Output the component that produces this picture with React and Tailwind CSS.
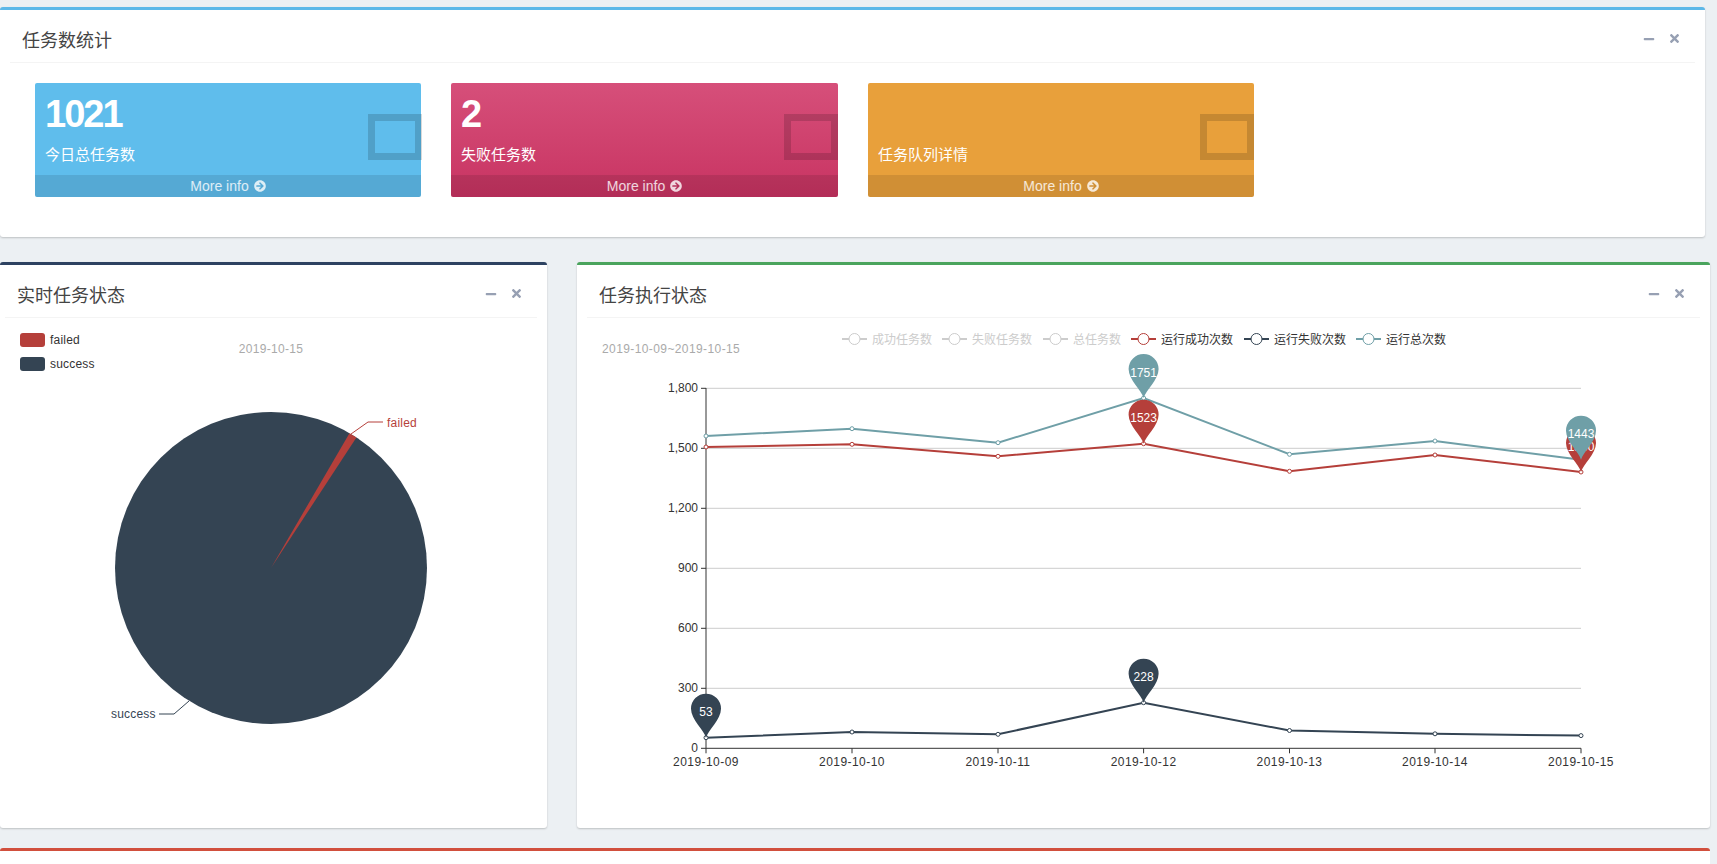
import React from 'react';
import { FaArrowCircleRight, FaMinus, FaTimes } from 'react-icons/fa';

const xs = [706, 852, 998, 1143.6, 1289.5, 1435, 1581];
const days = ['2019-10-09', '2019-10-10', '2019-10-11', '2019-10-12', '2019-10-13', '2019-10-14', '2019-10-15'];
const yOf = (v) => 748.3 - v * 0.2;

const RED = '#b53f3a';
const DARK = '#344453';
const TEAL = '#6f9fa7';

const series = [
  { color: DARK, ys: [737.7, 732, 734.3, 702.7, 730.5, 733.8, 735.6] },
  { color: RED, ys: [447, 444.3, 456.3, 443.7, 471.3, 455, 472] },
  { color: TEAL, ys: [436, 428.7, 442.7, 398, 454.3, 441, 459.7] },
];

const pins = [
  { i: 0, tip: 737.7, label: '53', color: DARK },
  { i: 3, tip: 702.7, label: '228', color: DARK },
  { i: 3, tip: 443.7, label: '1523', color: RED },
  { i: 6, tip: 472, label: '1380', color: RED },
  { i: 3, tip: 398, label: '1751', color: TEAL },
  { i: 6, tip: 459.7, label: '1443', color: TEAL },
];

const legend = [
  { x: 842, textX: 872, label: '成功任务数', color: '#ccc', text: '#ccc' },
  { x: 942, textX: 972, label: '失败任务数', color: '#ccc', text: '#ccc' },
  { x: 1043, textX: 1073, label: '总任务数', color: '#ccc', text: '#ccc' },
  { x: 1131, textX: 1161, label: '运行成功次数', color: RED, text: '#333' },
  { x: 1244, textX: 1274, label: '运行失败次数', color: DARK, text: '#333' },
  { x: 1356, textX: 1386, label: '运行总次数', color: TEAL, text: '#333' },
];

const cards = [
  { value: '1021', label: '今日总任务数', width: 'w-[386px]', bg: 'bg-[#5fbdec]', square: '-right-px' },
  { value: '2', label: '失败任务数', width: 'w-[387px]', bg: 'bg-gradient-to-b from-[#d64f7a] to-[#c83362]', square: 'right-0' },
  { value: '', label: '任务队列详情', width: 'w-[386px]', bg: 'bg-[#e8a03b]', square: 'right-0' },
];

const pinPath = (x, tip) =>
  `M${x} ${tip}C${x - 2} ${tip - 8} ${x - 15} ${tip - 18} ${x - 15} ${tip - 29}A15 15 0 1 1 ${x + 15} ${tip - 29}C${x + 15} ${tip - 18} ${x + 2} ${tip - 8} ${x} ${tip}Z`;

const BoxHeader = ({ title, className }) => (
  <div className={`h-[53px] pt-[10px] border-b border-[#f4f4f4] flex items-center justify-between pr-[16px] ${className}`}>
    <h3 className="text-[18px] leading-none text-[#444]">{title}</h3>
    <div className="flex items-center gap-[15px] text-[#97a0b3] -mt-[5px]">
      <FaMinus className="w-[12px] h-[12px]" />
      <FaTimes className="w-[9px] h-[13px]" />
    </div>
  </div>
);

const StatCard = ({ card }) => (
  <div className={`relative rounded-[2px] text-white ${card.width} ${card.bg}`}>
    <div className="h-[92px] pt-[10px] pl-[10px]">
      <div className="h-[42px] text-[38px] leading-[42px] font-bold tracking-[-2px]">{card.value}</div>
      <div className="mt-[9px] text-[15px] leading-[22px]">{card.label}</div>
    </div>
    <div className={`absolute top-[31px] w-[54px] h-[46px] border-[7px] border-black/15 ${card.square}`} />
    <div className="h-[22px] rounded-b-[2px] bg-black/10 flex items-center justify-center gap-[5px] text-[14px] text-white/80">
      More info <FaArrowCircleRight className="w-[12px] h-[12px]" />
    </div>
  </div>
);

const PieChart = () => {
  const cx = 271;
  const cy = 568;
  const r = 156;
  const a1 = (30.2 * Math.PI) / 180;
  const a2 = (33.2 * Math.PI) / 180;
  const wedge = `M${cx} ${cy}L${cx + r * Math.sin(a1)} ${cy - r * Math.cos(a1)}A${r} ${r} 0 0 1 ${cx + r * Math.sin(a2)} ${cy - r * Math.cos(a2)}Z`;
  return (
    <svg viewBox="0 318 547 510" width="547" height="510" className="block">
      <rect x="20" y="333" width="25" height="14" rx="3" fill={RED} />
      <text x="50" y="344" fontSize="12" fill="#333" letterSpacing="0.2">failed</text>
      <rect x="20" y="357" width="25" height="14" rx="3" fill={DARK} />
      <text x="50" y="368" fontSize="12" fill="#333" letterSpacing="0.2">success</text>
      <text x="271" y="353" fontSize="12" fill="#aaa" textAnchor="middle" letterSpacing="0.3">2019-10-15</text>
      <circle cx={cx} cy={cy} r={r} fill={DARK} />
      <path d={wedge} fill={RED} />
      <path d="M351 434L368 422H383" fill="none" stroke={RED} />
      <text x="387" y="426.5" fontSize="12" fill={RED} letterSpacing="0.2">failed</text>
      <path d="M189 701L174 714H159" fill="none" stroke={DARK} />
      <text x="111" y="718" fontSize="12" fill={DARK} letterSpacing="0.2">success</text>
    </svg>
  );
};

const LineChart = () => (
  <svg viewBox="577 318 1133 510" width="1133" height="510" className="block">
    <text x="602" y="353" fontSize="12" fill="#aaa" letterSpacing="0.4">2019-10-09~2019-10-15</text>
    {legend.map((l) => (
      <g key={l.label}>
        <path d={`M${l.x} 339h25`} stroke={l.color} strokeWidth="2" />
        <circle cx={l.x + 12.5} cy="339" r="5.5" fill="#fff" stroke={l.color} />
        <text x={l.textX} y="343.5" fontSize="12" fill={l.text}>{l.label}</text>
      </g>
    ))}
    {[300, 600, 900, 1200, 1500, 1800].map((v) => (
      <path key={v} d={`M706 ${yOf(v)}H1581`} stroke="#ccc" />
    ))}
    {[0, 300, 600, 900, 1200, 1500, 1800].map((v) => (
      <g key={v}>
        <path d={`M701 ${yOf(v)}H706`} stroke="#333" />
        <text x="698" y={yOf(v) + 4} fontSize="12" fill="#333" textAnchor="end">{v.toLocaleString('en-US')}</text>
      </g>
    ))}
    <path d="M706 388V748.3H1581" fill="none" stroke="#333" />
    {xs.map((x, i) => (
      <g key={x}>
        <path d={`M${x} 748.3v5`} stroke="#333" />
        <text x={x} y="766" fontSize="12" fill="#333" textAnchor="middle" letterSpacing="0.45">{days[i]}</text>
      </g>
    ))}
    {series.map((s) => (
      <g key={s.color}>
        <polyline points={xs.map((x, i) => `${x},${s.ys[i]}`).join(' ')} fill="none" stroke={s.color} strokeWidth="2" />
        {xs.map((x, i) => (
          <circle key={x} cx={x} cy={s.ys[i]} r="2" fill="#fff" stroke={s.color} />
        ))}
      </g>
    ))}
    {pins.map((p) => (
      <g key={p.label}>
        <path d={pinPath(xs[p.i], p.tip)} fill={p.color} />
        <text x={xs[p.i]} y={p.tip - 21.5} fontSize="12" fill="#fff" textAnchor="middle">{p.label}</text>
      </g>
    ))}
  </svg>
);

const App = () => {
  return (
    <div className="h-[864px] overflow-hidden bg-[#ecf0f3] pt-[7px] [font-family:'Liberation_Sans','Noto_Sans_CJK_SC',sans-serif]">
      <section className="w-[1705px] h-[230px] bg-white rounded-[3px] border-t-[3px] border-[#5cb8e8] shadow-[0_1px_2px_rgba(0,0,0,0.2)]">
        <BoxHeader title="任务数统计" className="mx-[10px] pl-[12px]" />
        <div className="flex gap-[30px] pl-[35px] pt-[20px]">
          {cards.map((card) => (
            <StatCard key={card.label} card={card} />
          ))}
        </div>
      </section>

      <div className="flex gap-[30px] mt-[25px]">
        <section className="w-[547px] h-[566px] bg-white rounded-[3px] border-t-[3px] border-[#2d4261] shadow-[0_1px_2px_rgba(0,0,0,0.2)]">
          <BoxHeader title="实时任务状态" className="ml-[5px] mr-[10px] pl-[12px]" />
          <PieChart />
        </section>
        <section className="w-[1133px] h-[566px] bg-white rounded-[3px] border-t-[3px] border-[#4aa45d] shadow-[0_1px_2px_rgba(0,0,0,0.2)]">
          <BoxHeader title="任务执行状态" className="mx-[10px] pl-[12px]" />
          <LineChart />
        </section>
      </div>

      <section className="w-[1710px] h-[40px] mt-[20px] bg-white rounded-[3px] border-t-[3px] border-[#d14f3d]" />
    </div>
  );
};

export default App;
